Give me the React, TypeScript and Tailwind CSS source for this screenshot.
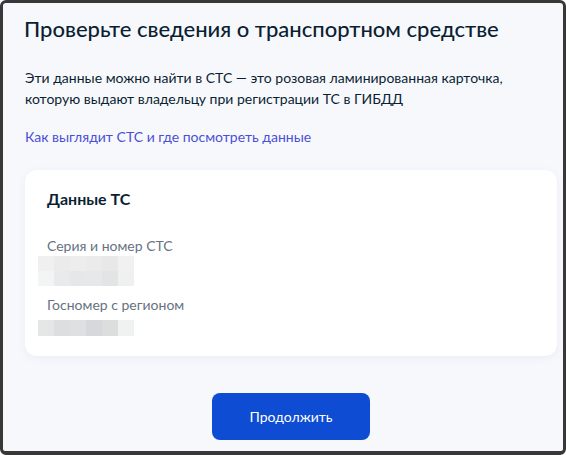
const STS_BLUR = [
  ['#f0f0f0', '#ebebec', '#ededee', '#ebebec', '#e8e8e9', '#f1f1f1'],
  ['#f3f4f4', '#e9eaeb', '#e6e7e8', '#e7e8e9', '#e3e4e6', '#eff0f0'],
];

const PLATE_BLUR = [['#e5e6e6', '#dcdedf', '#dfe0e1', '#d5d9dc', '#dcdddd', '#f0f1f1']];

function Blurred({ rows, rowClass }: { rows: string[][]; rowClass: string }) {
  return (
    <div className="-ml-[9px] flex flex-col">
      {rows.map((row, i) => (
        <div key={i} className={`flex ${rowClass}`}>
          {row.map((c, j) => (
            <div key={j} className="w-[16px] h-full" style={{ backgroundColor: c }} />
          ))}
        </div>
      ))}
    </div>
  );
}

export default function App() {
  return (
    <div
      className="w-[566px] h-[455px] border-[3px] border-b-4 border-[#383838] rounded-[6px] bg-[#f7f8fc] overflow-hidden text-[#0b1f33]"
      style={{ fontFamily: 'Lato, "Noto Sans", sans-serif' }}
    >
      <div className="ml-[22px] w-[532px] pt-[10px]">
        {/* Heading */}
        <h1 className="text-[22px] leading-[32px] font-medium -ml-px">
          Проверьте сведения о транспортном средстве
        </h1>

        <p className="mt-[22px] text-[14px] leading-[21px]">
          Эти данные можно найти в СТС — это розовая ламинированная карточка,
          <br />
          которую выдают владельцу при регистрации ТС в ГИБДД
        </p>

        <a href="#" className="block mt-[17px] text-[14px] leading-[21px] text-[#4b4fd6]">
          Как выглядит СТС и где посмотреть данные
        </a>

        {/* Vehicle data card */}
        <div className="mt-[23px] bg-white rounded-[12px] shadow-[0_2px_8px_rgba(102,119,153,0.08)] px-[22px] pt-[18px] h-[186px]">
          <h2 className="text-[16px] leading-[22px] font-bold">Данные ТС</h2>

          <div className="mt-[26px] text-[14px] leading-[20px] text-[#66727f]">Серия и номер СТС</div>
          <Blurred rows={STS_BLUR} rowClass="h-[15px]" />

          <div className="mt-[9px] text-[14px] leading-[20px] text-[#66727f]">Госномер с регионом</div>
          <div className="mt-[5px]">
            <Blurred rows={PLATE_BLUR} rowClass="h-[16px]" />
          </div>
        </div>

        <div className="flex justify-center mt-[37px]">
          <button className="w-[158px] h-[47px] rounded-[8px] bg-[#0d4cd3] text-white text-[14px] leading-[24px]">
            Продолжить
          </button>
        </div>
      </div>
    </div>
  );
}
